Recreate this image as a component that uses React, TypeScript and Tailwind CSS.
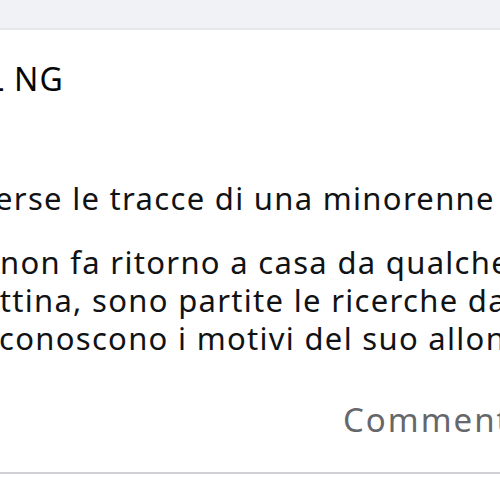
import React from "react";

export default function App() {
  return (
    <div
      className="w-[500px] h-[500px] overflow-hidden bg-white relative"
      style={{ fontFamily: '"Noto Sans", "Open Sans", sans-serif' }}
    >
      <div className="h-[30px] bg-[#f0f2f5] border-b-2 border-[#e6e8eb]" />
      <div className="flex flex-col">
        <div className="h-[68px] flex items-end">
          <div className="whitespace-nowrap text-[32px] leading-[38px] tracking-[1px] text-[#050505] ml-[-13px]">
            L NG
          </div>
        </div>
        <div className="h-[81px]" />
        <div className="flex flex-col text-[31px] leading-[38px] tracking-[1.3px] text-[#101214] whitespace-nowrap">
          <div className="ml-[-5px]">erse le tracce di una minorenne di</div>
          <div className="mt-[26px] ml-[0px]">non fa ritorno a casa da qualche giorno</div>
          <div className="ml-[-19px]">attina, sono partite le ricerche da parte</div>
          <div className="ml-[-1px]">conoscono i motivi del suo allontanamento</div>
        </div>
        <div className="flex mt-[44px] whitespace-nowrap">
          <div className="ml-[343px] text-[33px] leading-[38px] tracking-[2px] text-[#65676b]">Commenta</div>
        </div>
        <div className="mt-[33px] h-[2px] bg-[#cfd1d4]" />
      </div>
    </div>
  );
}
